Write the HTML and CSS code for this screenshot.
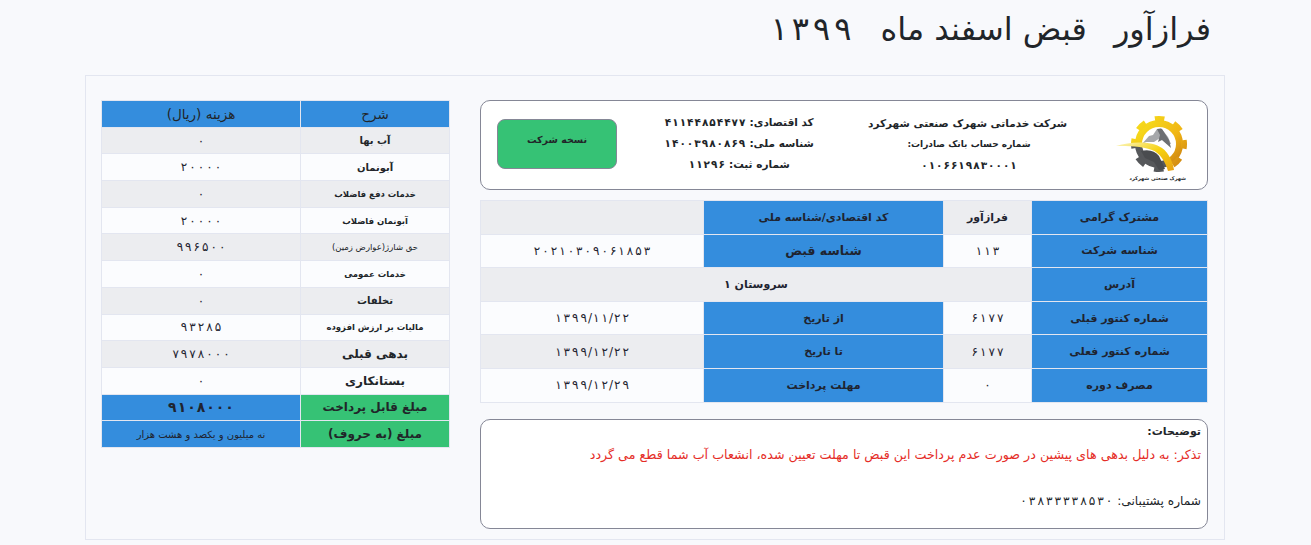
FILE: index.html
```html
<!DOCTYPE html>
<html lang="fa" dir="rtl">
<head>
<meta charset="utf-8">
<title>قبض</title>
<link rel="stylesheet" href="styles.css">
</head>
<body>
<div class="container">
  <h1 class="title"><span>فرازآور</span><span>قبض اسفند ماه</span><span class="num gap-xl">۱۳۹۹</span></h1>
  <div class="card">
    <div class="main">
      <section class="head-box">
        <div class="logo">
          <svg class="logo-svg" width="72" height="60" viewBox="0 0 72 60" aria-hidden="true">
            <defs>
              <linearGradient id="gearFill" x1="0" y1="0" x2="1" y2="1">
                <stop offset="0" stop-color="#f7e01c"/>
                <stop offset="0.6" stop-color="#f0b414"/>
                <stop offset="1" stop-color="#c97f12"/>
              </linearGradient>
              <linearGradient id="roadFill" x1="0" y1="0" x2="1" y2="1">
                <stop offset="0" stop-color="#fbf6c4"/>
                <stop offset="0.5" stop-color="#f6d20f"/>
                <stop offset="1" stop-color="#e8a012"/>
              </linearGradient>
              <clipPath id="gearTop"><path d="M0 0H72V60H56L46 36C36 28 18 27 0 30Z"/></clipPath>
              <clipPath id="gearBottom"><path d="M0 30C18 27 36 28 46 36L56 60H0Z"/></clipPath>
            </defs>
            <g clip-path="url(#gearTop)" fill="none" stroke="url(#gearFill)">
              <circle cx="43" cy="29" r="20.5" stroke-width="7"/>
              <circle cx="43" cy="29" r="25" stroke-width="6" stroke-dasharray="9.5 10.1" stroke-dashoffset="4.7"/>
            </g>
            <g clip-path="url(#gearBottom)" fill="none" stroke="#56585b">
              <circle cx="43" cy="29" r="20.5" stroke-width="7"/>
              <circle cx="43" cy="29" r="25" stroke-width="6" stroke-dasharray="9.5 10.1" stroke-dashoffset="4.7"/>
            </g>
            <path fill="#a5a7aa" d="M26 29L33 21l4-1 4-6 4-1 7 9 3 7-4 0-7-6-6 4-8 0z"/>
            <path fill="#6d6f72" d="M41 14l3 6-2 7 4-2 9 8-2-8-7-11z"/>
            <path fill="#4a4c4f" d="M25 36c8-2 14 0 18 5l6 13-6 1-5-8-9-4z"/>
            <path fill="url(#roadFill)" d="M0 31C16 26 36 26 46 33C53 38 57 48 58 55L52 56C49 46 44 38 36 35C26 31 12 31 0 31Z"/>
          </svg>
          <span class="logo-text">شهرک صنعتی شهرکرد</span>
        </div>
        <div class="company">
          <p class="company-name">شرکت خدماتی شهرک صنعتی شهرکرد</p>
          <p class="company-sub">شماره حساب بانک صادرات:</p>
          <p class="num gap-sm">۰۱۰۶۶۱۹۸۳۰۰۰۱</p>
        </div>
        <div class="ids">
          <p>کد اقتصادی: <span class="num gap-sm">۴۱۱۴۴۸۵۴۴۷۷</span></p>
          <p>شناسه ملی: <span class="num gap-sm">۱۴۰۰۳۹۸۰۸۶۹</span></p>
          <p>شماره ثبت: <span class="num gap-sm">۱۱۲۹۶</span></p>
        </div>
        <button class="copy-btn" type="button">نسخه شرکت</button>
      </section>

      <table class="info">
        <colgroup><col class="c1"><col class="c2"><col class="c3"><col class="c4"></colgroup>
        <tr class="odd"><th>مشترک گرامی</th><td class="strong">فرازآور</td><th>کد اقتصادی/شناسه ملی</th><td></td></tr>
        <tr><th>شناسه شرکت</th><td class="num">۱۱۳</td><th class="th-large">شناسه قبض</th><td class="num">۲۰۲۱۰۳۰۹۰۶۱۸۵۳</td></tr>
        <tr class="odd"><th>آدرس</th><td colspan="3" class="strong">سروستان ۱</td></tr>
        <tr><th>شماره کنتور قبلی</th><td class="num">۶۱۷۷</td><th>از تاریخ</th><td class="num">۱۳۹۹/۱۱/۲۲</td></tr>
        <tr class="odd"><th>شماره کنتور فعلی</th><td class="num">۶۱۷۷</td><th>تا تاریخ</th><td class="num">۱۳۹۹/۱۲/۲۲</td></tr>
        <tr><th>مصرف دوره</th><td class="num">۰</td><th>مهلت پرداخت</th><td class="num">۱۳۹۹/۱۲/۲۹</td></tr>
      </table>

      <section class="notes">
        <p class="notes-title">توضیحات:</p>
        <p class="notes-warn">تذکر: به دلیل بدهی های پیشین در صورت عدم پرداخت این قبض تا مهلت تعیین شده، انشعاب آب شما قطع می گردد</p>
        <p class="notes-phone">شماره پشتیبانی: <span class="num">۰۳۸۳۳۳۳۸۵۳۰</span></p>
      </section>
    </div>

    <aside class="side">
      <table class="costs">
        <colgroup><col class="d1"><col class="d2"></colgroup>
        <thead><tr><th>شرح</th><th class="amount-head">هزینه (ریال)</th></tr></thead>
        <tbody>
          <tr class="odd"><th>آب بها</th><td class="num">۰</td></tr>
          <tr><th>آبونمان</th><td class="num">۲۰۰۰۰</td></tr>
          <tr class="odd"><th class="tight">خدمات دفع فاضلاب</th><td class="num">۰</td></tr>
          <tr><th class="tight">آبونمان فاضلاب</th><td class="num">۲۰۰۰۰</td></tr>
          <tr class="odd"><th class="small">حق شارژ(عوارض زمین)</th><td class="num">۹۹۶۵۰۰</td></tr>
          <tr><th class="tight">خدمات عمومی</th><td class="num">۰</td></tr>
          <tr class="odd"><th>تخلفات</th><td class="num">۰</td></tr>
          <tr><th class="tight">مالیات بر ارزش افزوده</th><td class="num">۹۳۲۸۵</td></tr>
          <tr class="odd"><th class="wide">بدهی قبلی</th><td class="num">۷۹۷۸۰۰۰</td></tr>
          <tr><th class="wide">بستانکاری</th><td class="num">۰</td></tr>
          <tr class="total"><th>مبلغ قابل پرداخت</th><td class="big num gap-sm">۹۱۰۸۰۰۰</td></tr>
          <tr class="total"><th>مبلغ (به حروف)</th><td class="words">نه میلیون و یکصد و هشت هزار</td></tr>
        </tbody>
      </table>
    </aside>
  </div>
</div>
<script src="digits.js"></script>
</body>
</html>
```
FILE: styles.css
```css
* { box-sizing: border-box; }
html, body { margin: 0; padding: 0; }
body {
  background: #f8f9fc;
  color: #1f2430;
  font-family: "DejaVu Sans", sans-serif;
  font-size: 11px;
  height: 545px;
  overflow: hidden;
}
.container { width: 1140px; margin: 0 86px 0 85px; }
.title {
  display: flex;
  gap: 27px;
  margin: 0;
  height: 75px;
  padding: 9px 14px 0 0;
  font-size: 32px;
  line-height: 40px;
  font-weight: 400;
  color: #212529;
}
.card {
  display: flex;
  gap: 30px;
  height: 465px;
  padding: 24px 16px 0;
  border: 1px solid #e3e6f0;
  background: #f8f9fc;
}
.main { width: 728px; flex: none; }
.side { width: 349px; flex: none; }
p { margin: 0; }

/* letter-spacing has no effect on Arabic-script digits, so digits.js wraps each one */
.digit { margin: 0 1px; }
.gap-sm .digit { margin: 0 0.5px; }
.gap-xl .digit { margin: 0 2px; }

.head-box {
  display: flex;
  align-items: center;
  height: 90px;
  border: 1px solid #858796;
  border-radius: 10px;
  background: #fff;
  padding: 0 19px 0 16px;
  color: #212529;
}
.logo { width: 72px; flex: none; display: flex; flex-direction: column; align-items: flex-start; margin-left: 49px; padding-top: 6px; }
.logo-svg { display: block; }
.logo-text { font-size: 5px; font-weight: 700; line-height: 6px; white-space: nowrap; margin-right: 2px; }
.company, .ids { flex: none; text-align: center; white-space: nowrap; font-size: 10.5px; line-height: 21px; font-weight: 700; }
.company { width: 196px; padding-bottom: 2px; }
.company-sub { font-size: 9px; }
.ids { width: 160px; margin-right: 52px; padding-bottom: 4px; }
.copy-btn {
  width: 120px;
  height: 50px;
  margin: 0 auto 2px 0;
  border: 1px solid #858796;
  border-radius: 8px;
  background: #36c275;
  color: #212529;
  font: 700 9.5px "DejaVu Sans", sans-serif;
  padding: 0 0 9px;
}

table { border-collapse: collapse; width: calc(100% - 1px); table-layout: fixed; }
th, td { border: 1px solid #e3e6f0; text-align: center; padding: 0; }
.info { margin-top: 10px; }
.info tr { height: 33.6px; }
.info th { background: #348ddd; font-size: 11px; font-weight: 700; color: #1f2430; }
.info .th-large { font-size: 12.5px; }
.info td { background: #fbfcfe; font-size: 12px; }
.info .odd td { background: #ecedf0; }
.info .strong { font-size: 11px; font-weight: 700; }
.c1 { width: 176px; }
.c2 { width: 88px; }
.c3 { width: 240px; }
.c4 { width: 223px; }

.notes {
  margin-top: 16px;
  height: 110px;
  border: 1px solid #858796;
  border-radius: 10px;
  background: #fff;
  padding: 4px 6px;
  font-size: 11px;
  line-height: 16px;
  color: #212529;
}
.notes-title { font-weight: 700; }
.notes-warn { color: #e52d27; margin-top: 7px; font-size: 12.7px; white-space: nowrap; }
.notes-phone { margin-top: 30px; font-size: 12.2px; }

.d1 { width: 149px; }
.d2 { width: 199px; }
.costs tr { height: 26.7px; }
.costs th { font-size: 10px; font-weight: 700; color: #212529; background: #fbfcfe; }
.costs td { font-size: 12px; background: #fbfcfe; }
.costs .odd th, .costs .odd td { background: #ecedf0; }
.costs thead th { background: #348ddd; font-size: 13.5px; font-weight: 400; }
.costs .tight { font-size: 8.5px; }
.costs .wide { font-size: 12px; }
.costs .small { font-size: 8.5px; font-weight: 400; }
.costs .total th { background: #36c275; font-size: 12px; }
.costs .total td { background: #348ddd; }
.costs .big { font-size: 14px; font-weight: 700; }
.costs .words { font-size: 10px; font-weight: 400; }
```
FILE: digits.js
```js
document.querySelectorAll('.num').forEach(function (el) {
  var text = el.textContent;
  el.textContent = '';
  Array.from(text).forEach(function (ch) {
    if (/[\u06F0-\u06F9]/.test(ch)) {
      var span = document.createElement('span');
      span.className = 'digit';
      span.textContent = ch;
      el.appendChild(span);
    } else {
      el.appendChild(document.createTextNode(ch));
    }
  });
});
```
